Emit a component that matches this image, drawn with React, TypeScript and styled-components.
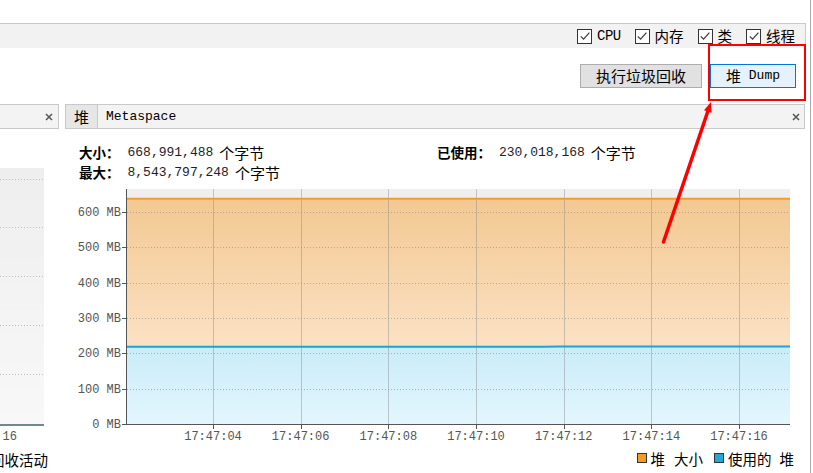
import React from "react";
import styled, { createGlobalStyle } from "styled-components";

const GlobalStyle = createGlobalStyle`
  html, body { margin: 0; padding: 0; background: #fff; overflow: hidden; }
  body { font-family: "Noto Sans CJK SC", "Noto Sans", sans-serif; color: #000; }
`;

const CJK = `"Noto Sans CJK SC", "Noto Sans", sans-serif`;
const MONO = `"Liberation Mono", "DejaVu Sans Mono", monospace`;

const Root = styled.div`
  position: relative;
  width: 813px;
  height: 473px;
  overflow: hidden;
  display: flex;
  background: #fff;
`;

const Main = styled.div`
  width: 810px;
  display: flex;
  flex-direction: column;
`;

const WindowEdge = styled.div`
  width: 1px;
  background: #a8a8a8;
`;

const TopSpace = styled.div`
  height: 23px;
`;

const Toolbar = styled.div`
  width: 806px;
  height: 25px;
  box-sizing: border-box;
  border-top: 1px solid #c9c9c9;
  border-right: 1px solid #c9c9c9;
  background: #f2f2f2;
  display: flex;
  justify-content: flex-end;
  align-items: center;
  gap: 14px;
  padding-right: 10px;
`;

const CheckItem = styled.label`
  display: inline-flex;
  align-items: center;
  gap: 5px;
  font-family: ${CJK};
  font-size: 14.5px;
  line-height: 16px;
`;

const CheckLatin = styled.span`
  font-family: ${MONO};
  font-size: 14px;
  letter-spacing: -0.6px;
`;

const Box = styled.span`
  width: 15px;
  height: 15px;
  box-sizing: border-box;
  border: 1px solid #333;
  background: #fff;
  display: inline-flex;
  align-items: center;
  justify-content: center;
`;

const ButtonRow = styled.div`
  width: 806px;
  height: 56px;
  box-sizing: border-box;
  display: flex;
  justify-content: flex-end;
  align-items: flex-start;
  gap: 8px;
  padding: 16px 10px 0 0;
`;

const Button = styled.button<{ $primary?: boolean }>`
  height: 24px;
  box-sizing: border-box;
  padding: 0 15px;
  border: 1px solid ${(p) => (p.$primary ? "#0078d7" : "#adadad")};
  background: ${(p) => (p.$primary ? "#e5f1fb" : "#e1e1e1")};
  font-family: ${CJK};
  font-size: 15px;
  line-height: 22px;
  color: #000;
  display: inline-flex;
  align-items: center;
  white-space: pre;
`;

const MonoText = styled.span<{ $size?: number }>`
  font-family: ${MONO};
  font-size: ${(p) => p.$size ?? 13}px;
  white-space: pre;
`;

const Panes = styled.div`
  display: flex;
  gap: 6px;
  flex: 1;
`;

const LeftPane = styled.div`
  width: 59px;
  display: flex;
  flex-direction: column;
  overflow: hidden;
`;

const RightPane = styled.div`
  width: 740px;
  display: flex;
  flex-direction: column;
`;

const TabBar = styled.div<{ $noLeft?: boolean }>`
  height: 25px;
  box-sizing: border-box;
  border: 1px solid #c9c9c9;
  border-left: ${(p) => (p.$noLeft ? "none" : "1px solid #c9c9c9")};
  background: #f3f3f3;
  display: flex;
  align-items: stretch;
`;

const Tab = styled.div<{ $active?: boolean }>`
  display: flex;
  align-items: center;
  padding: 0 8px;
  background: ${(p) => (p.$active ? "#e6e6e6" : "transparent")};
  border-right: ${(p) => (p.$active ? "1px solid #c9c9c9" : "none")};
  font-family: ${CJK};
  font-size: 15px;
`;

const TabLatin = styled.div`
  display: flex;
  align-items: center;
  padding-left: 8px;
  font-family: ${MONO};
  font-size: 13px;
`;

const CloseButton = styled.div<{ $right: number }>`
  margin-left: auto;
  margin-right: ${(p) => p.$right}px;
  display: flex;
  align-items: center;
`;

const LeftBody = styled.div`
  padding-top: 39px;
  display: flex;
  flex-direction: column;
`;

const LeftAxisRow = styled.div`
  height: 22px;
  display: flex;
  justify-content: flex-end;
  align-items: center;
  padding-right: 42px;
  overflow: hidden;
  font-family: ${MONO};
  font-size: 12px;
  color: #555;
  white-space: nowrap;
`;

const LegendRow = styled.div<{ $pad: number }>`
  height: 22px;
  display: flex;
  justify-content: flex-end;
  align-items: center;
  padding-right: ${(p) => p.$pad}px;
  overflow: hidden;
  white-space: nowrap;
  font-family: ${CJK};
  font-size: 14.5px;
`;

const LegendItem = styled.span<{ $gapBefore?: number }>`
  display: inline-flex;
  align-items: center;
  gap: 4px;
  margin-left: ${(p) => p.$gapBefore ?? 0}px;
`;

const Word = styled.span<{ $gap?: number }>`
  margin-left: ${(p) => p.$gap ?? 0}px;
`;

const Swatch = styled.span<{ $color: string }>`
  width: 10px;
  height: 10px;
  box-sizing: border-box;
  border: 1px solid #333;
  background: ${(p) => p.$color};
`;

const Info = styled.div`
  padding: 13px 0 0 14px;
  display: grid;
  grid-template-columns: 358px auto;
  grid-auto-rows: 20px;
  align-items: center;
`;

const InfoCell = styled.div`
  display: flex;
  align-items: center;
  white-space: nowrap;
`;

const InfoLabel = styled.span`
  font-family: ${CJK};
  font-weight: 700;
  font-size: 13.5px;
  margin-right: 8px;
`;

const InfoValue = styled.span`
  font-family: ${MONO};
  font-size: 13px;
  color: #1c1c2e;
`;

const InfoUnit = styled.span`
  font-family: ${CJK};
  font-size: 15px;
  margin-left: 6px;
`;

const ChartSvg = styled.svg`
  display: block;
`;

const Overlay = styled.svg`
  position: absolute;
  left: 0;
  top: 0;
  pointer-events: none;
`;

const Check = () => (
  <svg width="12" height="12" viewBox="0 0 12 12">
    <path d="M1.8 6.3 L4.6 9.2 L10.4 2.6" fill="none" stroke="#3a3a3a" strokeWidth="1.2" />
  </svg>
);

const CloseX = () => (
  <svg width="8" height="8" viewBox="0 0 8 8">
    <path d="M1 1 L7 7 M7 1 L1 7" stroke="#5a5a5a" strokeWidth="1.6" />
  </svg>
);

const CheckBox = ({ children }: { children: React.ReactNode }) => (
  <CheckItem>
    <Box>
      <Check />
    </Box>
    {children}
  </CheckItem>
);

const LeftPlot = () => {
  const lines = [11, 59, 108, 157, 206];
  return (
    <ChartSvg width={44} height={258}>
      <defs>
        <linearGradient id="lg" x1="0" y1="0" x2="0" y2="1">
          <stop offset="0" stopColor="#eeeeee" />
          <stop offset="1" stopColor="#f8f8f8" />
        </linearGradient>
      </defs>
      <rect x={0} y={0} width={44} height={256} fill="url(#lg)" />
      {lines.map((y) => (
        <line key={y} x1={0} x2={44} y1={y + 0.5} y2={y + 0.5} stroke="#bdbdbd" strokeDasharray="1 2" />
      ))}
      <rect x={0} y={256} width={44} height={2} fill="#6f8a8a" />
    </ChartSvg>
  );
};

const HeapChart = () => {
  const L = 62;
  const R = 725;
  const T = 7;
  const B = 242;
  const k = 212 / 600;
  const y = (mb: number) => B - mb * k;
  const heap = 637.5;
  const usedA = 218.3;
  const usedB = 219.4;
  const xs = [0, 1, 2, 3, 4, 5, 6].map((i) => 148 + i * 87.67);
  const times = ["17:47:04", "17:47:06", "17:47:08", "17:47:10", "17:47:12", "17:47:14", "17:47:16"];
  const mbs = [0, 100, 200, 300, 400, 500, 600];
  const usedPath = `M${L} ${y(usedA)} L460 ${y(usedA)} C475 ${y(usedA)} 480 ${y(usedB)} 495 ${y(usedB)} L${R} ${y(usedB)}`;
  return (
    <ChartSvg width={740} height={265}>
      <defs>
        <linearGradient id="og" x1="0" y1="0" x2="0" y2="1">
          <stop offset="0" stopColor="#f3c891" />
          <stop offset="0.65" stopColor="#fbe1c4" />
          <stop offset="1" stopColor="#fde9d4" />
        </linearGradient>
        <linearGradient id="bg" x1="0" y1="0" x2="0" y2="1">
          <stop offset="0" stopColor="#c9ecf9" />
          <stop offset="1" stopColor="#e3f6fd" />
        </linearGradient>
      </defs>
      <rect x={L} y={T} width={R - L} height={B - T} fill="#efefef" />
      <path d={`M${L} ${y(heap)} H${R} V${B} H${L} Z`} fill="url(#og)" />
      <path d={`${usedPath} V${B} H${L} Z`} fill="url(#bg)" />
      {mbs.slice(1).map((m) => (
        <line key={m} x1={L} x2={R} y1={Math.round(y(m)) + 0.5} y2={Math.round(y(m)) + 0.5} stroke="rgba(130,130,130,0.55)" strokeDasharray="1 2" />
      ))}
      {xs.map((x) => (
        <line key={x} x1={Math.round(x) + 0.5} x2={Math.round(x) + 0.5} y1={T} y2={B} stroke="rgba(140,140,140,0.45)" />
      ))}
      <line x1={L} x2={R} y1={y(heap)} y2={y(heap)} stroke="#f19c33" strokeWidth={2} />
      <path d={usedPath} fill="none" stroke="#1fa3d4" strokeWidth={2} />
      <line x1={L - 0.5} x2={L - 0.5} y1={T} y2={B + 1} stroke="#555" />
      <line x1={L - 1} x2={R} y1={B + 0.5} y2={B + 0.5} stroke="#555" />
      {mbs.map((m) => {
        const yy = Math.round(y(m)) + 0.5;
        return (
          <g key={m}>
            <line x1={L - 5} x2={L} y1={yy} y2={yy} stroke="#555" />
            <text x={L - 6} y={yy} textAnchor="end" dominantBaseline="middle" fontFamily={MONO} fontSize={12} fill="#555">
              {`${m} MB`}
            </text>
          </g>
        );
      })}
      {xs.map((x, i) => (
        <g key={times[i]}>
          <line x1={Math.round(x) + 0.5} x2={Math.round(x) + 0.5} y1={B} y2={B + 5} stroke="#555" />
          <text x={x} y={255} textAnchor="middle" dominantBaseline="middle" fontFamily={MONO} fontSize={12} fill="#555">
            {times[i]}
          </text>
        </g>
      ))}
    </ChartSvg>
  );
};

const Annotation = () => {
  const tip = { x: 711, y: 102 };
  const tail = { x: 663.5, y: 242 };
  const dx = tip.x - tail.x;
  const dy = tip.y - tail.y;
  const len = Math.hypot(dx, dy);
  const ux = dx / len;
  const uy = dy / len;
  const bx = tip.x - ux * 10;
  const by = tip.y - uy * 10;
  const nx = -uy;
  const ny = ux;
  const hw = 4;
  return (
    <Overlay width={813} height={473}>
      <rect x={709} y={45} width={96} height={55} fill="none" stroke="#ff0000" strokeWidth={2} />
      <line x1={tail.x} y1={tail.y} x2={bx} y2={by} stroke="#ff0000" strokeWidth={3.5} strokeLinecap="round" />
      <polygon points={`${tip.x},${tip.y} ${bx + nx * hw},${by + ny * hw} ${bx - nx * hw},${by - ny * hw}`} fill="#ff0000" />
    </Overlay>
  );
};

export default function App() {
  return (
    <>
      <GlobalStyle />
      <Root>
        <Main>
          <TopSpace />
          <Toolbar>
            <CheckBox>
              <CheckLatin>CPU</CheckLatin>
            </CheckBox>
            <CheckBox>内存</CheckBox>
            <CheckBox>类</CheckBox>
            <CheckBox>线程</CheckBox>
          </Toolbar>
          <ButtonRow>
            <Button>执行垃圾回收</Button>
            <Button $primary>
              堆<MonoText> Dump</MonoText>
            </Button>
          </ButtonRow>
          <Panes>
            <LeftPane>
              <TabBar $noLeft>
                <CloseButton $right={5}>
                  <CloseX />
                </CloseButton>
              </TabBar>
              <LeftBody>
                <LeftPlot />
                <LeftAxisRow>16</LeftAxisRow>
                <LegendRow $pad={11}>垃圾回收活动</LegendRow>
              </LeftBody>
            </LeftPane>
            <RightPane>
              <TabBar>
                <Tab $active>堆</Tab>
                <TabLatin>Metaspace</TabLatin>
                <CloseButton $right={4}>
                  <CloseX />
                </CloseButton>
              </TabBar>
              <Info>
                <InfoCell>
                  <InfoLabel>大小：</InfoLabel>
                  <InfoValue>668,991,488</InfoValue>
                  <InfoUnit>个字节</InfoUnit>
                </InfoCell>
                <InfoCell>
                  <InfoLabel>已使用：</InfoLabel>
                  <InfoValue>230,018,168</InfoValue>
                  <InfoUnit>个字节</InfoUnit>
                </InfoCell>
                <InfoCell>
                  <InfoLabel>最大：</InfoLabel>
                  <InfoValue>8,543,797,248</InfoValue>
                  <InfoUnit>个字节</InfoUnit>
                </InfoCell>
                <InfoCell />
              </Info>
              <HeapChart />
              <LegendRow $pad={11}>
                <LegendItem>
                  <Swatch $color="#f39c25" />
                  <span>
                    堆<Word $gap={9}>大小</Word>
                  </span>
                </LegendItem>
                <LegendItem $gapBefore={11}>
                  <Swatch $color="#22a8d8" />
                  <span>
                    使用的<Word $gap={8}>堆</Word>
                  </span>
                </LegendItem>
              </LegendRow>
            </RightPane>
          </Panes>
        </Main>
        <WindowEdge />
        <Annotation />
      </Root>
    </>
  );
}
